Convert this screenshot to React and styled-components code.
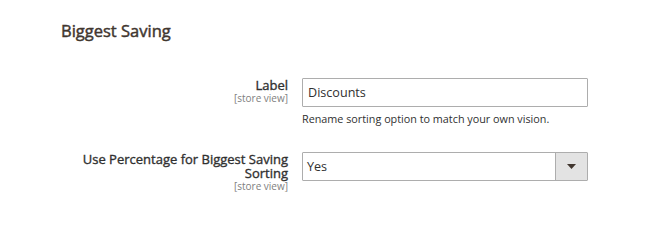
import React from 'react';
import styled, { createGlobalStyle } from 'styled-components';

const GlobalStyle = createGlobalStyle`
  body {
    margin: 0;
    background: #ffffff;
    font-family: 'Open Sans', 'Liberation Sans', sans-serif;
    color: #303030;
  }
`;

export default function App() {
  return (
    <>
      <GlobalStyle />
      <Section>
        <Legend>Biggest Saving</Legend>
        <Fields>
          <Field>
            <LabelCell>
              <LabelText>Label</LabelText>
              <Scope>[store view]</Scope>
            </LabelCell>
            <Control>
              <TextInput defaultValue="Discounts" />
              <Note>Rename sorting option to match your own vision.</Note>
            </Control>
          </Field>
          <Field>
            <LabelCell>
              <LabelText>Use Percentage for Biggest Saving Sorting</LabelText>
              <Scope>[store view]</Scope>
            </LabelCell>
            <Control>
              <SelectBox>
                <SelectValue>Yes</SelectValue>
                <SelectArrow>
                  <svg width="9" height="5" viewBox="0 0 9 5">
                    <path d="M0 0h9L4.5 5z" fill="#41362f" />
                  </svg>
                </SelectArrow>
              </SelectBox>
            </Control>
          </Field>
        </Fields>
      </Section>
    </>
  );
}

const Section = styled.div`
  padding: 19px 0 0 61px;
`;

const Legend = styled.div`
  font-size: 16.5px;
  font-weight: 400;
  -webkit-text-stroke: 0.45px #41362f;
  color: #41362f;
  line-height: 24px;
`;

const Fields = styled.div`
  display: flex;
  flex-direction: column;
  gap: 25px;
  margin-top: 35px;
`;

const Field = styled.div`
  display: grid;
  grid-template-columns: 227px 286px;
  column-gap: 14px;
  align-items: start;
`;

const LabelCell = styled.div`
  display: flex;
  flex-direction: column;
  align-items: flex-end;
  text-align: right;
`;

const LabelText = styled.div`
  font-size: 13px;
  font-weight: 400;
  -webkit-text-stroke: 0.35px #303030;
  line-height: 14px;
  color: #303030;
`;

const Scope = styled.div`
  font-size: 10px;
  line-height: 13px;
  color: #808080;
`;

const Control = styled.div`
  display: flex;
  flex-direction: column;
`;

const TextInput = styled.input`
  box-sizing: border-box;
  width: 286px;
  height: 29px;
  margin: 0;
  padding: 0 5px;
  border: 1px solid #adadad;
  border-radius: 1px;
  font-family: 'Open Sans', 'Liberation Sans', sans-serif;
  font-size: 12.6px;
  color: #303030;
  outline: none;
`;

const Note = styled.div`
  margin-top: 4px;
  font-size: 10.8px;
  line-height: 16px;
  color: #303030;
`;

const SelectBox = styled.div`
  box-sizing: border-box;
  display: flex;
  width: 286px;
  height: 29px;
  border: 1px solid #adadad;
  border-radius: 1px;
`;

const SelectValue = styled.div`
  flex: 1;
  display: flex;
  align-items: center;
  padding-left: 4px;
  font-size: 12.6px;
  color: #303030;
`;

const SelectArrow = styled.div`
  width: 31px;
  display: flex;
  align-items: center;
  justify-content: center;
  background: #e3e3e3;
  border-left: 1px solid #adadad;
`;
